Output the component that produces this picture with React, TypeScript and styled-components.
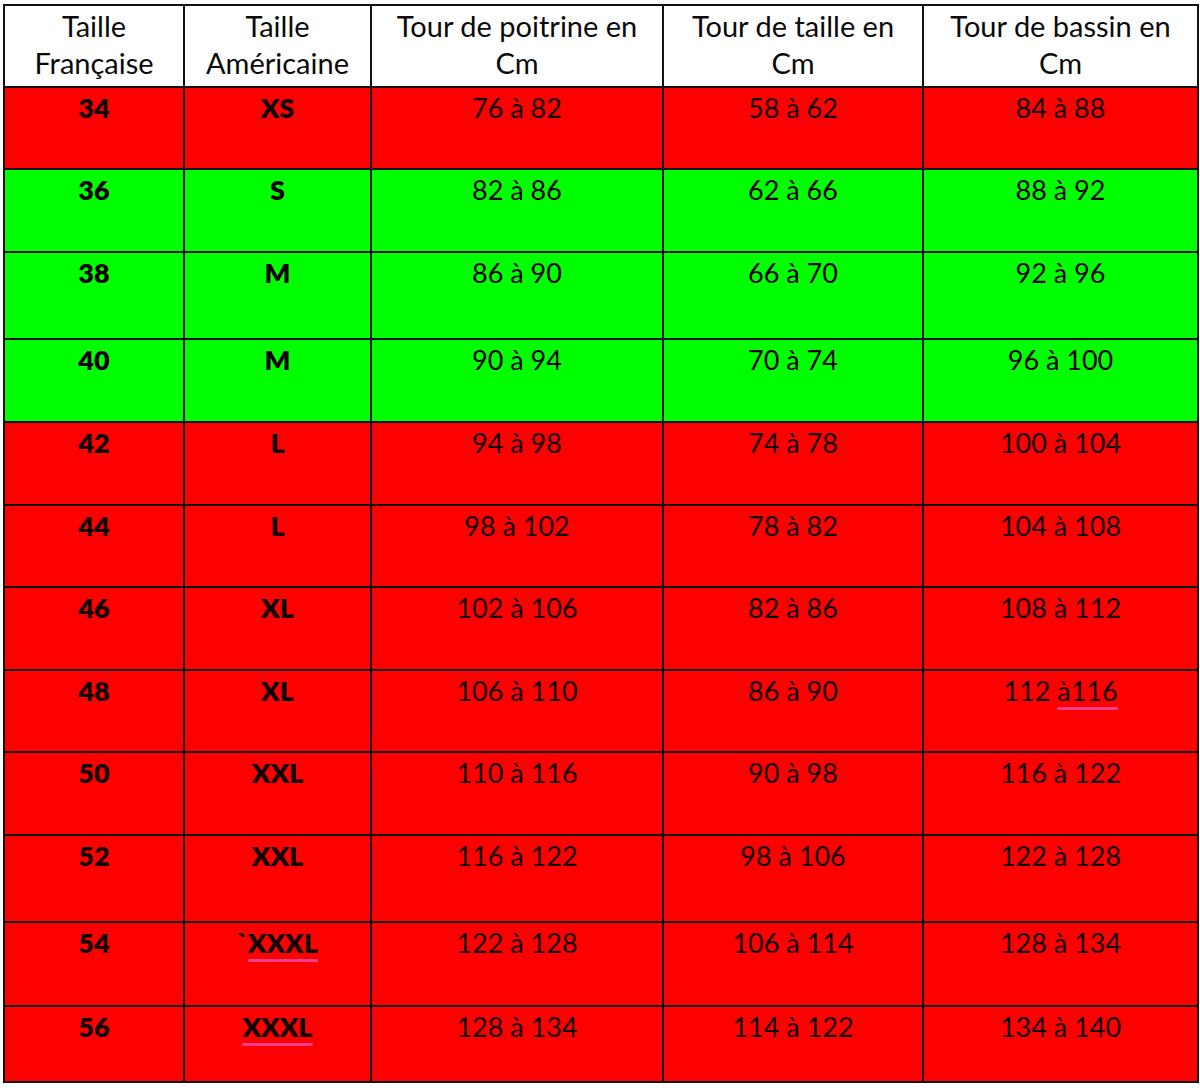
import React from "react";
import styled, { createGlobalStyle } from "styled-components";

const Global = createGlobalStyle`
  html, body { margin: 0; padding: 0; background: #ffffff; }
  body { font-family: Lato, "Liberation Sans", sans-serif; }
`;

const Page = styled.div`
  padding: 4px 0 0 3px;
`;

const Grid = styled.div`
  display: grid;
  width: 1196px;
  box-sizing: border-box;
  grid-template-columns: 178px 185px 290px 258px 273px;
  gap: 2px;
  padding: 2px;
  background: #111;
`;

const HeadCell = styled.div`
  background: #ffffff;
  height: 80px;
  box-sizing: border-box;
  padding-top: 1px;
  text-align: center;
  font-size: 29px;
  line-height: 37px;
  color: #0a0a0a;
  white-space: pre-line;
`;

const Cell = styled.div<{ $green: boolean; $h: number; $bold?: boolean }>`
  background: ${(p) => (p.$green ? "#00ff00" : "#ff0000")};
  height: ${(p) => p.$h}px;
  box-sizing: border-box;
  padding-top: 1px;
  text-align: center;
  font-size: 27px;
  line-height: 37px;
  font-weight: ${(p) => (p.$bold ? 800 : 400)};
  color: #100000;
`;

const Spell = styled.span`
  text-decoration: underline;
  text-decoration-color: #ff3c8e;
  text-decoration-thickness: 3px;
  text-underline-offset: 6px;
`;

type Row = {
  fr: string;
  us: React.ReactNode;
  chest: string;
  waist: string;
  hip: React.ReactNode;
  green: boolean;
  h: number;
};

const rows: Row[] = [
  { fr: "34", us: "XS", chest: "76 à 82", waist: "58 à 62", hip: "84 à 88", green: false, h: 80 },
  { fr: "36", us: "S", chest: "82 à 86", waist: "62 à 66", hip: "88 à 92", green: true, h: 81 },
  { fr: "38", us: "M", chest: "86 à 90", waist: "66 à 70", hip: "92 à 96", green: true, h: 85 },
  { fr: "40", us: "M", chest: "90 à 94", waist: "70 à 74", hip: "96 à 100", green: true, h: 81 },
  { fr: "42", us: "L", chest: "94 à 98", waist: "74 à 78", hip: "100 à 104", green: false, h: 81 },
  { fr: "44", us: "L", chest: "98 à 102", waist: "78 à 82", hip: "104 à 108", green: false, h: 80 },
  { fr: "46", us: "XL", chest: "102 à 106", waist: "82 à 86", hip: "108 à 112", green: false, h: 81 },
  {
    fr: "48",
    us: "XL",
    chest: "106 à 110",
    waist: "86 à 90",
    hip: (
      <>
        112 <Spell>à116</Spell>
      </>
    ),
    green: false,
    h: 80,
  },
  { fr: "50", us: "XXL", chest: "110 à 116", waist: "90 à 98", hip: "116 à 122", green: false, h: 81 },
  { fr: "52", us: "XXL", chest: "116 à 122", waist: "98 à 106", hip: "122 à 128", green: false, h: 85 },
  {
    fr: "54",
    us: (
      <>
        `<Spell>XXXL</Spell>
      </>
    ),
    chest: "122 à 128",
    waist: "106 à 114",
    hip: "128 à 134",
    green: false,
    h: 82,
  },
  {
    fr: "56",
    us: <Spell>XXXL</Spell>,
    chest: "128 à 134",
    waist: "114 à 122",
    hip: "134 à 140",
    green: false,
    h: 74,
  },
];

const headers = [
  "Taille\nFrançaise",
  "Taille\nAméricaine",
  "Tour de poitrine en\nCm",
  "Tour de taille en\nCm",
  "Tour de bassin en\nCm",
];

export default function App() {
  return (
    <Page>
      <Global />
      <Grid>
        {headers.map((h) => (
          <HeadCell key={h}>{h}</HeadCell>
        ))}
        {rows.map((r) => (
          <React.Fragment key={r.fr}>
            <Cell $green={r.green} $h={r.h} $bold>
              {r.fr}
            </Cell>
            <Cell $green={r.green} $h={r.h} $bold>
              {r.us}
            </Cell>
            <Cell $green={r.green} $h={r.h}>
              {r.chest}
            </Cell>
            <Cell $green={r.green} $h={r.h}>
              {r.waist}
            </Cell>
            <Cell $green={r.green} $h={r.h}>
              {r.hip}
            </Cell>
          </React.Fragment>
        ))}
      </Grid>
    </Page>
  );
}
